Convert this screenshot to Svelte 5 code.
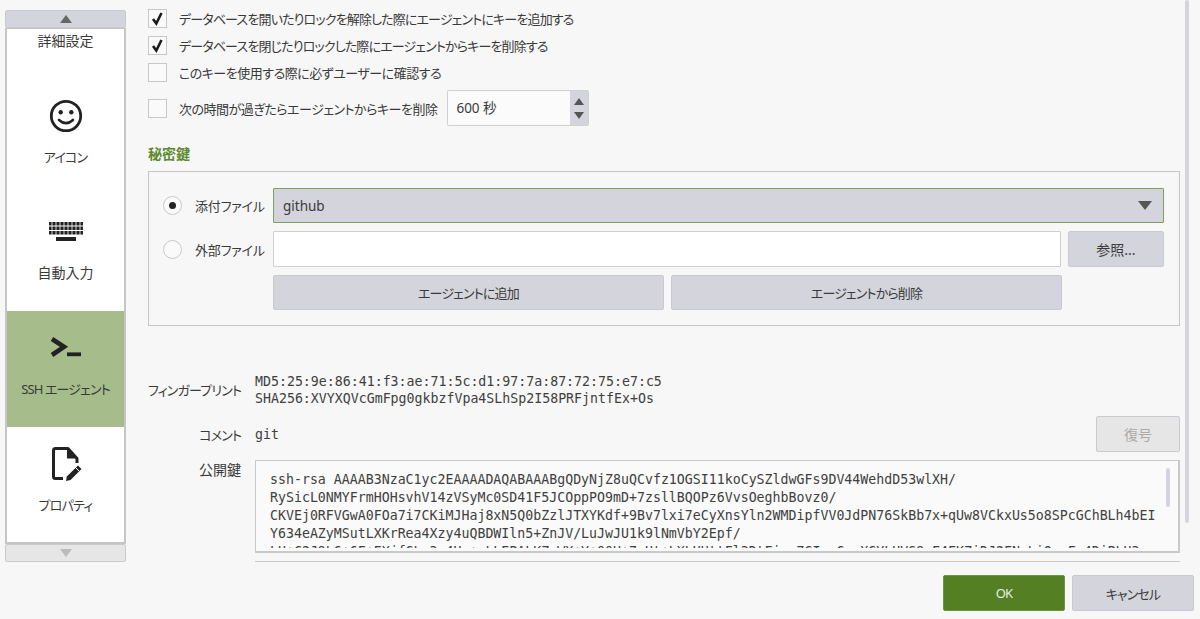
<script lang="ts">
  // sidebar sections, the first one is scrolled partly out of view
  const sections = [
    { id: "advanced", label: "詳細設定", kanji: true },
    { id: "icon", label: "アイコン", kanji: false },
    { id: "autotype", label: "自動入力", kanji: true },
    { id: "ssh", label: "SSH エージェント", kanji: false },
    { id: "properties", label: "プロパティ", kanji: false },
  ];
  const active = "ssh";

  const options = [
    { text: "データベースを開いたりロックを解除した際にエージェントにキーを追加する", checked: true, tight: true },
    { text: "データベースを閉じたりロックした際にエージェントからキーを削除する", checked: true, tight: true },
    { text: "このキーを使用する際に必ずユーザーに確認する", checked: false, tight: false },
  ];

  const keyLines = [
    "ssh-rsa AAAAB3NzaC1yc2EAAAADAQABAAABgQDyNjZ8uQCvfz1OGSI11koCySZldwGFs9DV44WehdD53wlXH/",
    "RySicL0NMYFrmHOHsvhV14zVSyMc0SD41F5JCOppPO9mD+7zsllBQOPz6VvsOeghbBovz0/",
    "CKVEj0RFVGwA0FOa7i7CKiMJHaj8xN5Q0bZzlJTXYKdf+9Bv7lxi7eCyXnsYln2WMDipfVV0JdPN76SkBb7x+qUw8VCkxUs5o8SPcGChBLh4bEI",
    "Y634eAZyMSutLXKrRea4Xzy4uQBDWIln5+ZnJV/LuJwJU1k9lNmVbY2Epf/",
    "LU+C2J9L6+6F+EXjfGLu3u4Hw+wLLEPALKZqWX+Y+00H+7sUt+LXLHHttFl3DtFiqx7GIsxGoqXGYLUVS9xF4FKZiDJ2FNxLiQxxFs4DiPLU3",
  ];
</script>

<div class="dialog">
  <div class="body">
    <aside class="sidebar">
      <button class="step up" aria-label="上へ"><span class="tri-up"></span></button>
      <div class="list">
        <div class="list-inner">
          {#each sections as s}
            <div class="item" class:active={s.id === active}>
              <div class="icon">
                {#if s.id === "icon"}
                  <svg width="34" height="34" viewBox="0 0 34 34">
                    <circle cx="17" cy="17" r="14.7" fill="none" stroke="#222" stroke-width="2.8" />
                    <circle cx="11.7" cy="13.2" r="2.2" fill="#222" />
                    <circle cx="22.3" cy="13.2" r="2.2" fill="#222" />
                    <path d="M10 21q7 6.4 14 0" fill="none" stroke="#222" stroke-width="2.6" stroke-linecap="round" />
                  </svg>
                {:else if s.id === "autotype"}
                  <svg width="34" height="20" viewBox="0 0 34 20">
                    <path d="M0 0h34v3.5H0zM0 4.5h34V8H0zM0 9h34v3.5H0z" fill="#222" />
                    <path d="M3 0v13M7 0v13M11 0v13M15 0v13M19 0v13M23 0v13M27 0v13M31 0v13" stroke="#fff" stroke-width=".8" />
                    <path d="M7 15h20v4H7z" fill="#222" />
                  </svg>
                {:else if s.id === "ssh"}
                  <svg width="32" height="22" viewBox="0 0 32 22">
                    <path d="M2 2l12 7.8L2 18" fill="none" stroke="#222" stroke-width="4.6" />
                    <path d="M17 15.4h14v3.8H17z" fill="#222" />
                  </svg>
                {:else if s.id === "properties"}
                  <svg width="32" height="36" viewBox="0 0 32 36">
                    <path d="M27 17v-4.500L18 2.500H5.500Q3.500 2.500 3.500 4.500v26q0 2 2 2H13" fill="none" stroke="#222" stroke-width="3" stroke-linejoin="round" />
                    <path d="M17 3v9.500h10z" fill="#222" />
                    <path d="M16 35l.8-4.500L28 19.500l3.500 3.500L20.500 34z" fill="#222" />
                    <path d="M25.500 21.500l3.500 3.500" stroke="#fff" stroke-width="1" />
                  </svg>
                {/if}
              </div>
              <div class="item-label" class:kanji={s.kanji}>{s.label}</div>
            </div>
          {/each}
        </div>
      </div>
      <button class="step down" aria-label="下へ"><span class="tri-down"></span></button>
    </aside>

    <main class="content">
      <div class="options">
        {#each options as o}
          <div class="check-row" class:tight={o.tight}>
            <span class="box">
              {#if o.checked}
                <svg width="17" height="17" viewBox="0 0 17 17">
                  <path d="M4 9l3.300 4.500L12.500 3" fill="none" stroke="#1c1c1c" stroke-width="2.600" />
                </svg>
              {/if}
            </span>
            <span>{o.text}</span>
          </div>
        {/each}
        <div class="check-row">
          <span class="box"></span>
          <span>次の時間が過ぎたらエージェントからキーを削除</span>
          <div class="spin">
            <span class="spin-value">600 秒</span>
            <div class="spin-btns">
              <span class="tri-up small"></span>
              <span class="tri-down small"></span>
            </div>
          </div>
        </div>
      </div>

      <h3 class="heading kanji">秘密鍵</h3>

      <section class="group">
        <div class="group-row">
          <div class="radio-cell">
            <span class="radio on"></span>
            <span>添付ファイル</span>
          </div>
          <div class="combo">
            <span>github</span>
            <span class="tri-down combo-arrow"></span>
          </div>
        </div>
        <div class="group-row">
          <div class="radio-cell">
            <span class="radio"></span>
            <span>外部ファイル</span>
          </div>
          <input class="path" type="text" />
          <button class="btn browse kanji">参照...</button>
        </div>
        <div class="group-row">
          <div class="radio-cell"></div>
          <button class="btn half">エージェントに追加</button>
          <button class="btn half">エージェントから削除</button>
        </div>
      </section>

      <div class="fingerprint field">
        <div class="field-label">フィンガープリント</div>
        <div class="mono">
          <div>MD5:25:9e:86:41:f3:ae:71:5c:d1:97:7a:87:72:75:e7:c5</div>
          <div>SHA256:XVYXQVcGmFpg0gkbzfVpa4SLhSp2I58PRFjntfEx+Os</div>
        </div>
      </div>

      <div class="comment field">
        <div class="field-label">コメント</div>
        <div class="mono grow">git</div>
        <button class="btn decrypt kanji" disabled>復号</button>
      </div>

      <div class="pubkey field">
        <div class="field-label kanji">公開鍵</div>
        <div class="key-box">
          <div class="key-text mono">
            {#each keyLines as line}
              <div>{line}</div>
            {/each}
          </div>
          <span class="key-thumb"></span>
        </div>
      </div>

      <div class="rule"></div>
    </main>
  </div>

  <footer class="footer">
    <button class="btn primary">OK</button>
    <button class="btn cancel">キャンセル</button>
  </footer>

  <span class="page-thumb"></span>
</div>

<style>
  :global(body) {
    margin: 0;
    background: #f7f7f7;
  }

  .dialog {
    position: relative;
    width: 1200px;
    height: 619px;
    overflow: hidden;
    background: #f7f7f7;
    color: #3a3a3a;
    font-family: "Noto Sans", "Noto Sans CJK JP", sans-serif;
    font-size: 13px;
    font-feature-settings: "palt";
    letter-spacing: -0.85px;
  }

  /* labels that are only kanji run wider than the kana ones */
  .kanji {
    font-size: 14px;
    letter-spacing: 0;
  }

  .body {
    display: flex;
    height: 575px;
  }

  /* sidebar */
  .sidebar {
    width: 121px;
    margin: 10px 0 0 5px;
    display: flex;
    flex-direction: column;
    flex: none;
  }

  .step {
    display: flex;
    align-items: center;
    justify-content: center;
    height: 18px;
    padding: 0;
    box-sizing: border-box;
    border: 1px solid #c9c9cf;
    border-radius: 2px;
  }

  .step.up {
    background: #d4d4dc;
  }

  .step.down {
    background: #e6e6e6;
  }

  .tri-up,
  .tri-down {
    display: block;
    width: 0;
    height: 0;
    border-left: 6px solid transparent;
    border-right: 6px solid transparent;
  }

  .tri-up {
    border-bottom: 8px solid #666;
  }

  .tri-down {
    border-top: 8px solid #bbb;
  }

  .list {
    height: 516px;
    box-sizing: border-box;
    border: 1px solid #c6c6c6;
    border-width: 1px 2px 2px 2px;
    background: #fff;
    overflow: hidden;
  }

  .list-inner {
    margin-top: -66px;
  }

  .item {
    height: 116px;
    display: flex;
    flex-direction: column;
    align-items: center;
  }

  .item.active {
    background: #a6bd8b;
  }

  .icon {
    height: 36px;
    margin-top: 19px;
    display: flex;
    align-items: center;
    justify-content: center;
  }

  .item-label {
    margin-top: 14px;
    line-height: 18px;
    white-space: nowrap;
  }

  /* main column */
  .content {
    width: 1032px;
    margin-left: 22px;
    padding-top: 9px;
    flex: none;
  }

  .options {
    display: flex;
    flex-direction: column;
    gap: 8px;
  }

  .check-row {
    display: flex;
    align-items: center;
    gap: 12px;
    min-height: 19px;
    letter-spacing: -0.5px;
  }

  .check-row.tight {
    letter-spacing: -0.85px;
  }

  .box {
    width: 19px;
    height: 19px;
    box-sizing: border-box;
    border: 1px solid #c8c8c8;
    background: #fafafa;
    display: flex;
    align-items: center;
    justify-content: center;
    flex: none;
  }

  .spin {
    display: flex;
    width: 142px;
    height: 36px;
    margin-left: -2px;
    box-sizing: border-box;
    border: 1px solid #d0d0d0;
    border-radius: 2px;
    background: #fbfbfb;
    font-size: 13.500px;
    letter-spacing: 0;
  }

  .spin-value {
    flex: 1;
    padding-left: 8px;
    line-height: 34px;
  }

  .spin-btns {
    width: 18px;
    background: #d4d4dc;
    display: flex;
    flex-direction: column;
    align-items: center;
    justify-content: center;
    gap: 7px;
  }

  .small {
    border-left-width: 5px;
    border-right-width: 5px;
  }

  .tri-up.small {
    border-bottom: 7px solid #555;
  }

  .tri-down.small {
    border-top: 7px solid #555;
  }

  .heading {
    margin: 19px 0 8px;
    line-height: 18px;
    font-weight: 700;
    color: #5d8a2f;
  }

  .group {
    box-sizing: border-box;
    height: 155px;
    border: 1px solid #c6c6c6;
    padding: 16px 15px 0 14px;
    display: flex;
    flex-direction: column;
    gap: 8px;
  }

  .group-row {
    display: flex;
    gap: 7px;
    height: 35px;
  }

  .group-row:nth-child(2) {
    height: 36px;
  }

  .radio-cell {
    width: 103px;
    flex: none;
    display: flex;
    align-items: center;
    gap: 13px;
    white-space: nowrap;
    letter-spacing: -0.2px;
  }

  .radio {
    position: relative;
    width: 19px;
    height: 19px;
    box-sizing: border-box;
    border: 1px solid #c8c8c8;
    border-radius: 50%;
    background: #fafafa;
    flex: none;
  }

  .radio.on::after {
    content: "";
    position: absolute;
    left: 5px;
    top: 5px;
    width: 7px;
    height: 7px;
    border-radius: 50%;
    background: #222;
  }

  .combo {
    flex: 1;
    box-sizing: border-box;
    border: 1px solid #7f9f5f;
    background: #d4d4dc;
    border-radius: 1px;
    display: flex;
    align-items: center;
    justify-content: space-between;
    padding: 0 11px 0 9px;
    font-size: 13.500px;
    letter-spacing: 0;
  }

  .combo-arrow {
    border-left-width: 7px;
    border-right-width: 7px;
    border-top: 9px solid #555;
  }

  .path {
    width: 788px;
    box-sizing: border-box;
    border: 1px solid #d0d0d0;
    border-radius: 1px;
    background: #fff;
    flex: none;
  }

  .btn {
    box-sizing: border-box;
    border: 1px solid #c9c9cf;
    border-radius: 2px;
    background: #d4d4dc;
    color: #3a3a3a;
    font-family: inherit;
    font-feature-settings: inherit;
    font-size: 13px;
    letter-spacing: inherit;
    padding: 0;
  }

  .btn.kanji {
    font-size: 14px;
    letter-spacing: 0;
  }

  .browse {
    width: 96px;
  }

  .half {
    width: 391px;
    flex: none;
  }

  .field {
    display: flex;
    gap: 14px;
  }

  .field-label {
    width: 93px;
    flex: none;
    display: flex;
    justify-content: flex-end;
    white-space: nowrap;
  }

  .mono {
    font-family: "DejaVu Sans Mono", monospace;
    font-size: 13.250px;
    line-height: 17px;
    font-feature-settings: normal;
    letter-spacing: 0;
    color: #404040;
    padding-top: 1px;
  }

  .grow {
    flex: 1;
  }

  .fingerprint {
    margin-top: 46px;
    height: 35px;
    align-items: center;
  }

  .comment {
    margin-top: 9px;
    height: 36px;
    align-items: center;
  }

  .decrypt {
    width: 84px;
    height: 36px;
    background: #e6e6e6;
    color: #aaa;
  }

  .pubkey {
    margin-top: 8px;
  }

  .pubkey .field-label {
    line-height: 20px;
  }

  .key-box {
    position: relative;
    width: 925px;
    height: 93px;
    box-sizing: border-box;
    border: 1px solid #c9c9c9;
    border-width: 1px 2px 2px 1px;
    background: #fafafa;
    padding: 9px 0 0 14px;
  }

  .key-text {
    height: 77px;
    overflow: hidden;
    line-height: 18px;
    white-space: nowrap;
  }

  .key-thumb {
    position: absolute;
    left: 910px;
    top: 7px;
    width: 4px;
    height: 39px;
    border-radius: 2px;
    background: #d4d4de;
  }

  .rule {
    margin: 8px 0 0 107px;
    height: 1px;
    background: #c9c9c9;
  }

  .footer {
    display: flex;
    justify-content: flex-end;
    gap: 7px;
    padding-right: 6px;
  }

  .footer .btn {
    width: 122px;
    height: 36px;
  }

  .primary {
    background: #548023;
    border-color: #6d9544;
    color: #e8eee0;
  }

  /* overlay thumb of the page scrollbar */
  .page-thumb {
    position: absolute;
    left: 1185px;
    top: 0;
    width: 4px;
    height: 523px;
    border-radius: 2px;
    background: #d4d4de;
  }
</style>
